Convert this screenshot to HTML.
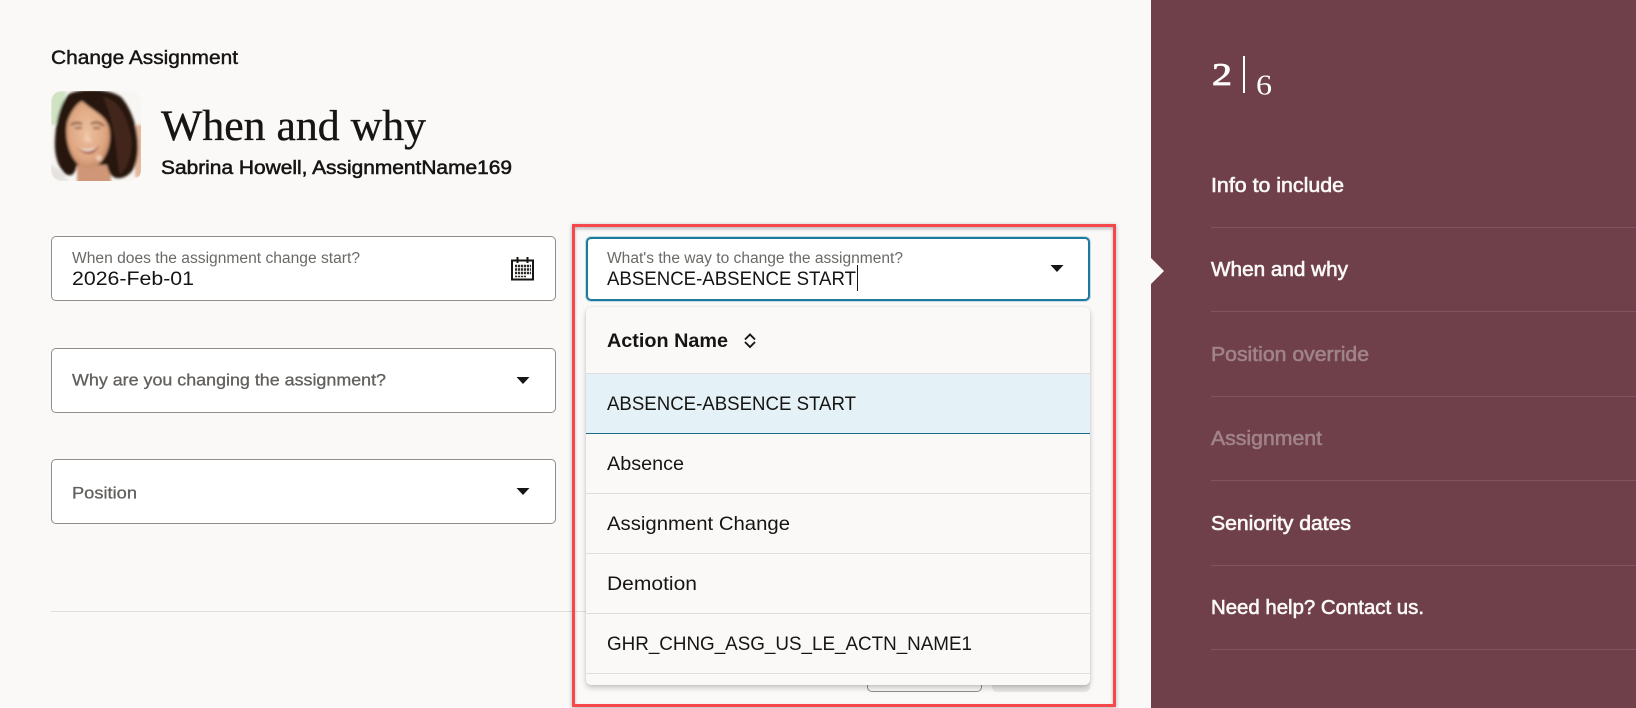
<!DOCTYPE html>
<html lang="en"><head><meta charset="utf-8"><title>When and why</title>
<style>
html,body{margin:0;padding:0;width:1636px;height:708px;overflow:hidden;background:#fbf9f8}
body{position:relative;font-family:"Liberation Sans",sans-serif}
.a{position:absolute;box-sizing:border-box}
.in{background:#fff;border:1px solid #8f8d8a;border-radius:5px}
svg.t{position:absolute;left:0;top:0;width:1636px;height:708px;overflow:visible}
svg text{font-family:"Liberation Sans",sans-serif;fill:#161513}
.lb{font-size:15.5px;fill:#6b6966}
.v{font-size:19.5px}
.ph{font-size:17px;fill:#62605d;stroke:#62605d;stroke-width:.3px}
.m{stroke:#161513;stroke-width:.45px}
.sb{font-size:20px;fill:#fbf9f8;stroke:#fbf9f8;stroke-width:.6px}
.dis{fill:#a08289;stroke:#a08289}
</style></head><body>

<div class="a" style="left:1151px;top:0;width:485px;height:708px;background:#6f404a"></div>
<svg class="t" viewBox="0 0 1636 708">
<polygon points="1151,258 1164,271 1151,284" fill="#fbf9f8"/>
<g stroke="#805560" stroke-width="1"><path d="M1211 227.500H1636M1211 311.500H1636M1211 396.500H1636M1211 480.500H1636M1211 565.500H1636M1211 649.500H1636"/></g>
<rect x="1243" y="56" width="2" height="37" fill="#fff"/>
<text x="1212" y="85" textLength="20" lengthAdjust="spacingAndGlyphs" style="font-family:'Liberation Serif',serif;font-size:32px;fill:#fff;stroke:#fff;stroke-width:.8px">2</text>
<text x="1256" y="94.500" textLength="16" lengthAdjust="spacingAndGlyphs" style="font-family:'Liberation Serif',serif;font-size:29px;fill:#fff">6</text>
<text class="sb" x="1211" y="192" textLength="133" lengthAdjust="spacingAndGlyphs">Info to include</text>
<text class="sb" x="1211" y="276" textLength="137" lengthAdjust="spacingAndGlyphs">When and why</text>
<text class="sb dis" x="1211" y="361" textLength="158" lengthAdjust="spacingAndGlyphs">Position override</text>
<text class="sb dis" x="1211" y="445" textLength="111" lengthAdjust="spacingAndGlyphs">Assignment</text>
<text class="sb" x="1211" y="530" textLength="140" lengthAdjust="spacingAndGlyphs">Seniority dates</text>
<text class="sb" x="1211" y="614" textLength="213" lengthAdjust="spacingAndGlyphs">Need help? Contact us.</text>
</svg>

<!-- avatar -->
<svg class="a" style="left:51px;top:91px" width="90" height="90" viewBox="0 0 90 90">
<defs><clipPath id="c"><rect width="90" height="90" rx="11"/></clipPath><filter id="b" x="-20%" y="-20%" width="140%" height="140%"><feGaussianBlur stdDeviation="1.300"/></filter>
<radialGradient id="f" cx="48%" cy="46%" r="62%"><stop offset="0" stop-color="#ecc09f"/><stop offset=".65" stop-color="#dfa782"/><stop offset="1" stop-color="#bb7f5e"/></radialGradient></defs>
<g clip-path="url(#c)">
<rect width="90" height="90" fill="#f7f6f3"/>
<g filter="url(#b)">
<path d="M0 0H16L5 34H0Z" fill="#cfe2c2"/>
<path d="M84 34H92V86H84Z" fill="#e3b89b"/>
<path d="M0 74L10 80L18 90H0Z" fill="#e6e3df"/>
<path d="M26 68H60V92H26Z" fill="#cf9777"/>
<path d="M18 3C30 -3 58 -3 70 6C81 18 88 40 87 60C86 74 82 84 70 87C62 88 58 84 56 74L26 74C24 84 20 86 14 83C7 76 3 64 4 48C5 30 9 12 18 3Z" fill="#26140d"/>
<path d="M52 6C66 8 76 24 80 46C82 62 76 78 69 84C65 70 67 38 52 6Z" fill="#43281b"/>
<path d="M16 32C19 22 25 13 31 10C42 20 54 24 58 36C61 50 57 65 47 74C40 79 31 78 25 71C17 61 14 46 16 32Z" fill="url(#f)"/>
<path d="M20 34Q25 30 31 33M40 33Q46 29 53 35" stroke="#7b513c" stroke-width="2" fill="none"/>
<path d="M24 37H31M42 37H49" stroke="#6b4230" stroke-width="1.600" fill="none"/>
<path d="M35 40L33 50Q37 53 41 50Z" fill="#f0c9ac"/>
<path d="M25 56Q37 65 49 54Q40 71 25 56Z" fill="#a9624e"/>
<path d="M28 57Q38 61 47 55Q38 64 28 57Z" fill="#fdf7ef"/>
<circle cx="48" cy="67" r="3" fill="#eecbb3"/>
</g></g></svg>

<!-- form fields -->
<div class="a in" style="left:51px;top:236px;width:505px;height:65px"></div>
<div class="a in" style="left:51px;top:348px;width:505px;height:65px"></div>
<div class="a in" style="left:51px;top:459px;width:505px;height:65px"></div>
<div class="a" style="left:51px;top:611px;width:1039px;height:1px;background:#e0dedb"></div>
<div class="a" style="left:867px;top:650px;width:115px;height:42px;border:1px solid #8f8d8a;border-radius:5px"></div>
<div class="a" style="left:992px;top:650px;width:98px;height:42px;background:#e9e7e5;border-radius:5px"></div>

<div class="a" style="left:586px;top:237px;width:504px;height:64px;background:#fff;border:2px solid #1d7a9e;border-radius:5px;box-shadow:0 0 0 1px #c3dde7"></div>

<!-- dropdown -->
<div class="a" style="left:586px;top:307px;width:504px;height:378px;background:#fbf9f8;border-radius:5px;box-shadow:0 3px 6px rgba(0,0,0,.2),0 0 2px rgba(0,0,0,.1)">
<div class="a" style="left:0;top:66px;width:504px;height:1px;background:#dfdddb"></div>
<div class="a" style="left:0;top:67px;width:504px;height:60px;background:#e4f1f7;border-bottom:1px solid #1d6c8a"></div>
<div class="a" style="left:0;top:186px;width:504px;height:1px;background:#dfdddb"></div>
<div class="a" style="left:0;top:246px;width:504px;height:1px;background:#dfdddb"></div>
<div class="a" style="left:0;top:306px;width:504px;height:1px;background:#dfdddb"></div>
<div class="a" style="left:0;top:366px;width:504px;height:1px;background:#dfdddb"></div>
</div>

<svg class="t" viewBox="0 0 1636 708">
<text x="51" y="64" textLength="187" lengthAdjust="spacingAndGlyphs" class="m" style="font-size:19.5px">Change Assignment</text>
<text x="161" y="140" textLength="265" lengthAdjust="spacingAndGlyphs" style="font-family:'Liberation Serif',serif;font-size:43px;stroke:#161513;stroke-width:.35px">When and why</text>
<text x="161" y="174" textLength="351" lengthAdjust="spacingAndGlyphs" class="m" style="font-size:19.5px;stroke-width:.55px">Sabrina Howell, AssignmentName169</text>

<text class="lb" x="72" y="263" textLength="288" lengthAdjust="spacingAndGlyphs">When does the assignment change start?</text>
<text class="v" x="72" y="285" textLength="122" lengthAdjust="spacingAndGlyphs">2026-Feb-01</text>
<!-- calendar -->
<g fill="none" stroke="#161513">
<rect x="512" y="260.500" width="21" height="19" stroke-width="2"/>
<path d="M517.500 257V263M527.500 257V263" stroke-width="2"/>
</g>
<g stroke="#2a2927" stroke-width="2.400" stroke-dasharray="2.200 .8"><path d="M515 266H531M515 269.500H531M515 273H531"/></g>
<path d="M515 276.500H526" stroke="#2a2927" stroke-width="1.500" stroke-dasharray="2.200 .8"/>

<text class="ph" x="72" y="385.500" textLength="314" lengthAdjust="spacingAndGlyphs">Why are you changing the assignment?</text>
<path d="M516.500 377H529.500L523 384Z" fill="#161513"/>
<text class="ph" x="72" y="498.500" textLength="65" lengthAdjust="spacingAndGlyphs">Position</text>
<path d="M516.500 488H529.500L523 495Z" fill="#161513"/>

<text class="lb" x="607" y="263" textLength="296" lengthAdjust="spacingAndGlyphs">What's the way to change the assignment?</text>
<text class="v" x="607" y="285" textLength="249" lengthAdjust="spacingAndGlyphs">ABSENCE-ABSENCE START</text>
<rect x="857" y="265" width="1" height="26" fill="#161513"/>
<path d="M1050.500 265H1063.500L1057 272Z" fill="#161513"/>

<text x="607" y="347" textLength="121" lengthAdjust="spacingAndGlyphs" style="font-size:19.5px;font-weight:700">Action Name</text>
<path d="M745 339.500L750 334.500L755 339.500M745 342L750 347L755 342" fill="none" stroke="#161513" stroke-width="1.900"/>
<text class="v" x="607" y="410" textLength="249" lengthAdjust="spacingAndGlyphs">ABSENCE-ABSENCE START</text>
<text class="v" x="607" y="470" textLength="77" lengthAdjust="spacingAndGlyphs">Absence</text>
<text class="v" x="607" y="530" textLength="183" lengthAdjust="spacingAndGlyphs">Assignment Change</text>
<text class="v" x="607" y="590" textLength="90" lengthAdjust="spacingAndGlyphs">Demotion</text>
<text class="v" x="607" y="650" textLength="365" lengthAdjust="spacingAndGlyphs">GHR_CHNG_ASG_US_LE_ACTN_NAME1</text>
</svg>

<!-- annotation -->
<div class="a" style="left:572px;top:224px;width:544px;height:483px;border:3.500px solid #f5474c;box-shadow:0 1px 4px rgba(0,0,0,.3),inset 0 2px 3px rgba(0,0,0,.25)"></div>
</body></html>
